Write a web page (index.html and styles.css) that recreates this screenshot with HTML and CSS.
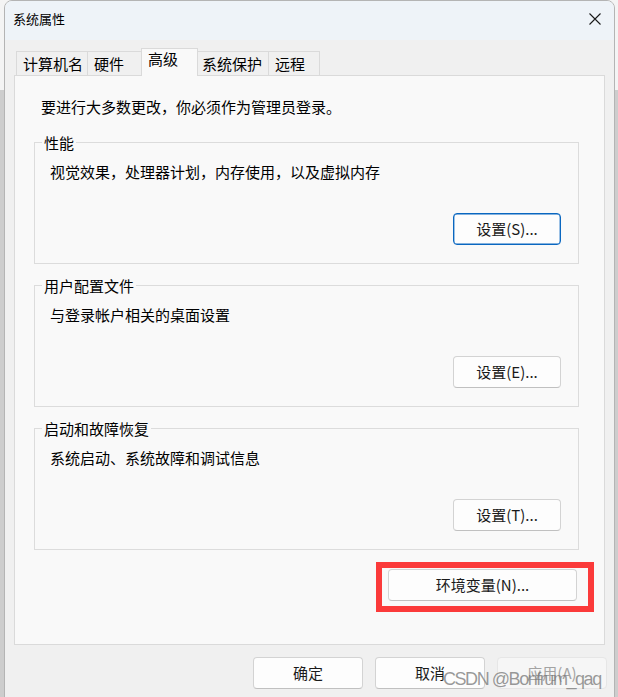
FILE: index.html
```html
<!DOCTYPE html>
<html lang="zh-CN">
<head>
<meta charset="utf-8">
<title>系统属性</title>
<link rel="stylesheet" href="styles.css">
</head>
<body>
<div class="desktop">
  <div class="window">
    <div class="titlebar">
      <span class="title">系统属性</span>
      <svg class="close" width="12" height="12" viewBox="0 0 12 12"><path d="M0.5 0.5 L11.5 11.5 M11.5 0.5 L0.5 11.5" stroke="#1a1a1a" stroke-width="1.1" fill="none"/></svg>
    </div>
    <div class="tabs">
      <div class="tab tab-w72">计算机名</div>
      <div class="tab tab-w55">硬件</div>
      <div class="tab tab-w57 tab-active">高级</div>
      <div class="tab tab-w72 tab-tight">系统保护</div>
      <div class="tab tab-w52">远程</div>
    </div>
    <div class="panel">
      <p class="intro">要进行大多数更改，你必须作为管理员登录。</p>
      <div class="group">
        <div class="legend">性能</div>
        <p class="gtext">视觉效果，处理器计划，内存使用，以及虚拟内存</p>
        <div class="grow"><button class="btn btn-set btn-focus">设置(S)...</button></div>
      </div>
      <div class="group group-next">
        <div class="legend">用户配置文件</div>
        <p class="gtext">与登录帐户相关的桌面设置</p>
        <div class="grow"><button class="btn btn-set">设置(E)...</button></div>
      </div>
      <div class="group group-next">
        <div class="legend">启动和故障恢复</div>
        <p class="gtext">系统启动、系统故障和调试信息</p>
        <div class="grow"><button class="btn btn-set">设置(T)...</button></div>
      </div>
      <div class="env-row">
        <div class="env-wrap">
          <button class="btn btn-env">环境变量(N)...</button>
          <div class="mark"></div>
        </div>
      </div>
    </div>
    <div class="footer">
      <button class="btn btn-foot">确定</button>
      <button class="btn btn-foot">取消</button>
      <button class="btn btn-foot btn-disabled">应用(A)</button>
    </div>
    <div class="watermark">CSDN @Bonfrum_qaq</div>
  </div>
</div>
</body>
</html>
```

FILE: styles.css
```css
html, body {
  margin: 0;
  padding: 0;
}
body {
  font-family: "Noto Sans CJK SC", "Microsoft YaHei", sans-serif;
  color: #000;
}
.desktop {
  width: 618px;
  height: 697px;
  overflow: hidden;
  background: linear-gradient(to bottom, #f4f4f4 0, #f4f4f4 90px, #cdcdcd 90px, #cdcdcd 100%);
}
.window {
  position: relative;
  margin-left: 4px;
  width: 611px;
  height: 720px;
  box-sizing: border-box;
  border: 1px solid #b4b4b4;
  border-radius: 8px 8px 0 0;
  background: #f0f0f0;
  overflow: hidden;
}
.titlebar {
  height: 39px;
  box-sizing: border-box;
  display: flex;
  justify-content: space-between;
  align-items: flex-start;
  padding: 8px 13px 0 8px;
  background: #eef3f8;
}
.title {
  font-size: 13px;
  line-height: 20px;
  color: #000;
}
.close {
  margin-top: 4px;
  display: block;
}
.tabs {
  display: flex;
  align-items: flex-end;
  height: 28px;
  margin: 8px 0 -1px 11px;
}
.tab {
  position: relative;
  height: 25px;
  box-sizing: border-box;
  border: 1px solid #dadada;
  background: #f0f0f0;
  font-size: 15px;
  line-height: 20px;
  padding: 2px 0 0 6px;
  white-space: nowrap;
  margin-left: -1px;
}
.tab:first-child {
  margin-left: 0;
}
.tab-tight {
  padding-left: 4px;
}
.tab-active {
  height: 28px;
  border-bottom: none;
  background: #f9f9f9;
  padding-top: 0;
  z-index: 1;
}
.tab-w72 { width: 72px; }
.tab-w55 { width: 55px; }
.tab-w57 { width: 57px; }
.tab-w52 { width: 52px; }
.panel {
  margin-left: 9px;
  width: 591px;
  height: 570px;
  box-sizing: border-box;
  border: 1px solid #dadada;
  background: #f9f9f9;
  padding: 21px 25px 0 19px;
}
.intro {
  margin: 0 0 0 7px;
  font-size: 15px;
  line-height: 20px;
}
.group {
  margin-top: 25px;
  height: 122px;
  box-sizing: border-box;
  border: 1px solid #dcdcdc;
  padding: 0 17px 0 15px;
}
.group-next {
  margin-top: 21px;
}
.legend {
  display: table;
  margin: -10px 0 0 -8px;
  padding: 0 2px;
  background: #f9f9f9;
  font-size: 15px;
  line-height: 20px;
}
.gtext {
  margin: 9px 0 0 0;
  font-size: 15px;
  line-height: 20px;
}
.grow {
  display: flex;
  justify-content: flex-end;
  margin-top: 31px;
}
.btn {
  display: block;
  height: 32px;
  box-sizing: border-box;
  border: 1px solid #d3d3d3;
  border-bottom-color: #c0c0c0;
  border-radius: 4px;
  background: #fdfdfd;
  font-family: "Noto Sans CJK SC", "Microsoft YaHei", sans-serif;
  font-size: 15px;
  line-height: 20px;
  color: #1a1a1a;
  padding: 0;
  margin: 0;
}
.btn-set {
  width: 108px;
}
.btn-focus {
  border: 1px solid #0a67c0;
  box-shadow: inset 0 0 0 0.4px #0a67c0;
}
.env-row {
  display: flex;
  justify-content: flex-end;
  margin-top: 19px;
  padding-right: 2px;
}
.env-wrap {
  position: relative;
}
.btn-env {
  width: 189px;
}
.mark {
  position: absolute;
  left: -12px;
  top: -7px;
  width: 218px;
  height: 50px;
  box-sizing: border-box;
  border: 6.5px solid #fb3a3a;
}
.footer {
  display: flex;
  justify-content: flex-end;
  gap: 12px;
  margin-top: 12px;
  padding-right: 7px;
}
.btn-foot {
  width: 110px;
}
.btn-disabled {
  background: #f6f6f6;
  border-color: #e6e6e6;
  color: #a3a3a3;
}
.watermark {
  position: absolute;
  left: 438px;
  top: 668px;
  font-family: "Liberation Sans", Arial, sans-serif;
  font-size: 18px;
  line-height: 20px;
  letter-spacing: -1.45px;
  color: rgba(115, 115, 115, 0.72);
  white-space: nowrap;
}
```
